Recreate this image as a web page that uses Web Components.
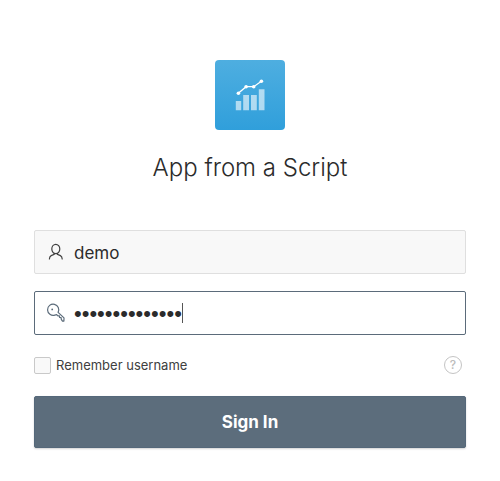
<!DOCTYPE html>
<html lang="en">
<head>
<meta charset="utf-8">
<meta name="viewport" content="width=device-width, initial-scale=1">
<title>App from a Script</title>
<style>
body { margin: 0; background: #fff; color: #2b2b2b; font-family: Inter, "Liberation Sans", sans-serif; }
</style>
</head>
<body>
<login-page>
  <app-logo slot="header"></app-logo>
  <span slot="title">App from a Script</span>
  <text-field type="text" label="Username" value="demo">
    <svg slot="icon" width="20" height="20" viewBox="0 0 20 20" fill="none" stroke="#404040" stroke-width="1.2" stroke-linecap="round"><ellipse cx="9.8" cy="7" rx="4" ry="4.7"/><path d="M8.2 11.5v.8L5.2 13.6C4 14.2 3.5 15 3.4 17M11.4 11.5v.8l3 1.3c1.2.6 1.7 1.4 1.8 3.4"/></svg>
  </text-field>
  <text-field type="password" label="Password" value="demopassword14" active>
    <svg slot="icon" width="20" height="20" viewBox="0 0 20 20" fill="none" stroke="#5b6b7a" stroke-width="1.2" stroke-linejoin="round"><path d="M12.1 9.4A5.6 5.6 0 1 0 8.8 12.1l1.9-.4 1.2 1.2 1.5-.1.2 1.7 1.5.1.2 1.7 1.2 1.8h1.4l.1-3.2z"/><circle cx="6.2" cy="6.4" r=".9" fill="#5b6b7a" stroke="none"/></svg>
  </text-field>
  <remember-row>Remember username</remember-row>
  <submit-button>Sign In</submit-button>
</login-page>

<script>
function define(name, html, setup) {
  const template = document.createElement('template');
  template.innerHTML = html;
  customElements.define(name, class extends HTMLElement {
    constructor() {
      super();
      this.attachShadow({ mode: 'open' }).append(template.content.cloneNode(true));
    }
    connectedCallback() { if (setup) setup(this, this.shadowRoot); }
  });
}

define('login-page', `
<style>
:host { display: block; padding: 60px 34px 32px; }
header { display: flex; flex-direction: column; align-items: center; gap: 20px; margin-bottom: 44px; }
h1 { margin: 0; font-size: 24px; line-height: 36px; font-weight: 350; text-align: center; }
form { display: flex; flex-direction: column; }
::slotted(text-field) { margin-bottom: 17px; }
</style>
<header><slot name="header"></slot><h1><slot name="title"></slot></h1></header>
<form><slot></slot></form>`);

define('app-logo', `
<style>
:host { display: block; width: 70px; height: 70px; }
svg { display: block; }
</style>
<svg width="70" height="70" viewBox="0 0 70 70" role="img" aria-label="Chart">
  <defs><linearGradient id="g" x1="0" y1="0" x2="0" y2="1"><stop offset="0" stop-color="#4eaee0"/><stop offset="1" stop-color="#309fdb"/></linearGradient></defs>
  <rect width="70" height="70" rx="4" fill="url(#g)"/>
  <path fill="#fff" fill-opacity=".6" d="M20.8 41h5.4v9.3h-5.4zM28.2 35h5.8v15.3h-5.8zM36 35h5.8v15.3H36zM43.8 29.2h5.7v21.1h-5.7z"/>
  <path d="M23.3 33.3l7.8-6.6h7.6l7.7-5.4" fill="none" stroke="#fff" stroke-width="1.3"/>
  <g fill="#fff"><circle cx="23.4" cy="33.3" r="1.8"/><circle cx="31.1" cy="26.7" r="1.8"/><circle cx="38.7" cy="26.7" r="1.8"/><circle cx="46.4" cy="21.3" r="1.8"/></g>
</svg>`);

define('text-field', `
<style>
:host { display: block; }
label { display: flex; align-items: center; box-sizing: border-box; height: 44px; padding: 0 12px 0 11px; border: 1px solid #dfdfdf; border-radius: 2px; background: #f8f8f8; cursor: text; }
:host([active]) label { border-color: #5b6b7a; background: #fff; }
::slotted(svg) { flex: none; margin-right: 8px; }
input { flex: 1; min-width: 0; padding: 2px 0 0; border: 0; outline: 0; background: none; color: #2b2b2b; font: 400 17px/24px Inter, "Liberation Sans", sans-serif; }
input[type=password] { font: 400 22px/24px "Liberation Sans", sans-serif; }
:host([active]) input { flex: none; field-sizing: content; max-width: 100%; caret-color: transparent; }
i { display: none; width: 1px; height: 20px; background: #555; }
:host([active]) i { display: block; }
</style>
<label><slot name="icon"></slot><input><i></i></label>`, (host, root) => {
  const input = root.querySelector('input');
  input.type = host.getAttribute('type');
  input.value = host.getAttribute('value');
  input.setAttribute('aria-label', host.getAttribute('label'));
});

define('remember-row', `
<style>
:host { display: flex; align-items: center; justify-content: space-between; margin: 3px 0 21px; }
label { display: flex; align-items: center; gap: 5px; font-size: 13px; line-height: 20px; color: #404040; }
input { appearance: none; box-sizing: border-box; width: 17px; height: 17px; margin: 0; border: 1px solid #c9c9c9; border-radius: 2px; background: #f9f9f9; }
input:checked { background: #5b6b7a; }
button { box-sizing: border-box; width: 18px; height: 18px; margin-right: 4px; padding: 0; border: 1px solid #c4c4c4; border-radius: 50%; background: none; color: #bcbcbc; font: 500 12px/16px Inter, "Liberation Sans", sans-serif; }
</style>
<label><input type="checkbox"><span><slot></slot></span></label>
<button type="button" aria-label="Help">?</button>`);

define('submit-button', `
<style>
:host { display: block; }
button { display: block; box-sizing: border-box; width: 100%; height: 52px; padding: 0; border: 1px solid #55687a; border-radius: 2px; background: #5c6d7c; box-shadow: 0 1px 2px rgba(0,0,0,.18); color: #fff; font: 700 17px/24px Inter, "Liberation Sans", sans-serif; }
</style>
<button type="submit"><slot></slot></button>`);
</script>
</body>
</html>
